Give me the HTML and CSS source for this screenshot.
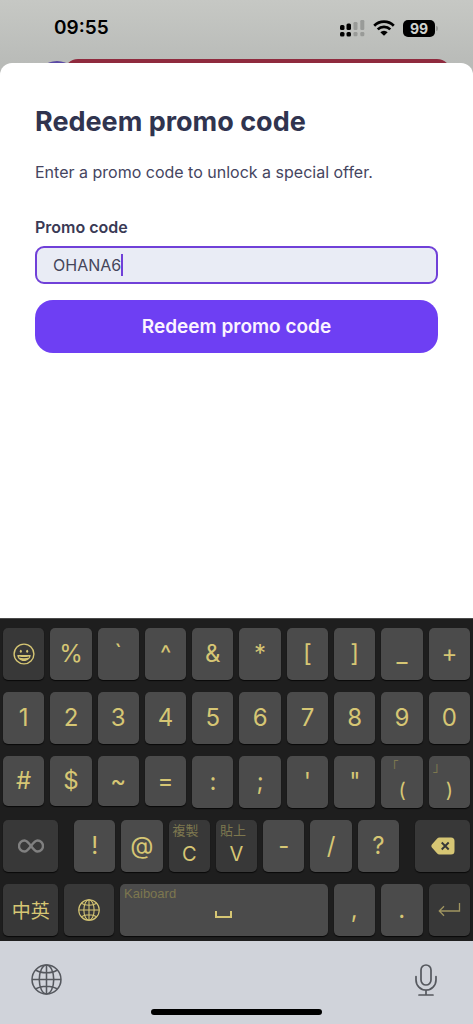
FILE: index.html
```html
<!DOCTYPE html>
<html lang="en">
<head>
<meta charset="utf-8">
<meta name="viewport" content="width=device-width, initial-scale=1">
<title>Redeem promo code</title>
<link rel="stylesheet" href="styles.css">
</head>
<body>
<svg class="defs" aria-hidden="true">
  <symbol id="globe" viewBox="0 0 30 30">
    <g fill="none" stroke="currentColor" stroke-width="1.5">
      <circle cx="15" cy="15" r="14"/>
      <ellipse cx="15" cy="15" rx="7" ry="14"/>
      <path d="M15 1v28M1 15h28M4.500 5.800c5.500 3.600 15.500 3.600 21 0M4.500 24.200c5.500-3.600 15.500-3.600 21 0"/>
    </g>
  </symbol>
</svg>
<div class="screen">
  <header class="status">
    <span class="peek-avatar"></span>
    <span class="peek-banner"></span>
    <time class="clock">09:55</time>
    <div class="indicators">
      <svg class="signal" viewBox="0 0 25 17" aria-hidden="true">
        <rect x="0" y="5" width="4.500" height="5" rx="1.500"/>
        <rect x="6.500" y="3.500" width="4.500" height="6.500" rx="1.500"/>
        <g fill="#999b98"><rect x="13.500" y="2" width="4" height="8" rx="1.200"/><rect x="20.300" y="0" width="4" height="10" rx="1.200"/>
        <rect x="13.500" y="12" width="4" height="4.300" rx="1.200"/><rect x="20.300" y="12" width="4" height="4.300" rx="1.200"/></g>
        <rect x="0" y="12" width="4.500" height="4.500" rx="1.500"/>
        <rect x="6.500" y="12" width="4.500" height="4.500" rx="1.500"/>
      </svg>
      <svg class="wifi" viewBox="0 0 22 16" aria-hidden="true">
        <g fill="none" stroke="#000" stroke-width="2.700"><path d="M1.200 5.700a14 14 0 0 1 19.600 0"/><path d="M4.700 9.400a9 9 0 0 1 12.600 0"/></g>
        <path d="M7.300 12.200a5.300 5.300 0 0 1 7.400 0L11 15.800z"/>
      </svg>
      <span class="battery">99</span>
    </div>
  </header>

  <main class="sheet">
    <h1 class="title">Redeem promo code</h1>
    <p class="lead">Enter a promo code to unlock a special offer.</p>
    <form class="form">
      <label class="label" for="promo">Promo code</label>
      <div class="field">
        <input class="input" id="promo" type="text" value="OHANA6">
        <span class="caret"></span>
      </div>
      <button class="submit" type="button">Redeem promo code</button>
    </form>
  </main>

  <section class="keyboard" aria-label="Keyboard">
    <div class="row">
      <button class="key dark" aria-label="Emoji"><svg class="icon-face" viewBox="0 0 22 22">
        <circle cx="11" cy="11" r="9.900" fill="none" stroke="currentColor" stroke-width="1.400"/>
        <ellipse cx="7.800" cy="8.300" rx="1" ry="1.500" fill="currentColor"/><ellipse cx="14.200" cy="8.300" rx="1" ry="1.500" fill="currentColor"/>
        <path d="M4.300 12h13.400c-.2 3.500-3 6-6.700 6s-6.500-2.500-6.700-6z" fill="currentColor"/>
        <path d="M6 14c2.800.8 7.200.8 10 0" fill="none" stroke="#383838" stroke-width="1.300"/>
      </svg></button>
      <button class="key">%</button>
      <button class="key">`</button>
      <button class="key">^</button>
      <button class="key">&amp;</button>
      <button class="key">*</button>
      <button class="key">[</button>
      <button class="key">]</button>
      <button class="key">_</button>
      <button class="key">+</button>
    </div>
    <div class="row">
      <button class="key">1</button>
      <button class="key">2</button>
      <button class="key">3</button>
      <button class="key">4</button>
      <button class="key">5</button>
      <button class="key">6</button>
      <button class="key">7</button>
      <button class="key">8</button>
      <button class="key">9</button>
      <button class="key">0</button>
    </div>
    <div class="row">
      <button class="key short">#</button>
      <button class="key short">$</button>
      <button class="key short">~</button>
      <button class="key short">=</button>
      <button class="key">:</button>
      <button class="key">;</button>
      <button class="key">'</button>
      <button class="key">"</button>
      <button class="key dual"><span class="hint">「</span><span class="main">(</span></button>
      <button class="key dual"><span class="hint">」</span><span class="main">)</span></button>
    </div>
    <div class="row row-symbols">
      <button class="key dark wide" aria-label="Lock"><svg class="icon-infinity" viewBox="0 0 26 14">
        <path d="M13 7C10.500 3.500 9 1.500 6.500 1.500a5.500 5.500 0 0 0 0 11C9 12.500 10.500 10.500 13 7s4-5.500 6.500-5.500a5.500 5.500 0 0 1 0 11C17 12.500 15.500 10.500 13 7z" fill="none" stroke="currentColor" stroke-width="2.400"/>
      </svg></button>
      <button class="key">!</button>
      <button class="key">@</button>
      <button class="key dark dual"><span class="hint">複製</span><span class="main">C</span></button>
      <button class="key dark dual"><span class="hint">貼上</span><span class="main">V</span></button>
      <button class="key">-</button>
      <button class="key">/</button>
      <button class="key">?</button>
      <button class="key dark wide" aria-label="Delete"><svg class="icon-delete" viewBox="0 0 24 18">
        <path d="M8.500.5H20A3.500 3.500 0 0 1 23.500 4v10A3.500 3.500 0 0 1 20 17.500H8.500c-1 0-1.700-.4-2.300-1L.9 10.400c-.7-.8-.7-2 0-2.800l5.300-6C6.800.9 7.500.5 8.500.5z" fill="currentColor"/>
        <path d="M10.700 5.500l7 7M17.700 5.500l-7 7" stroke="#383838" stroke-width="1.900"/>
      </svg></button>
    </div>
    <div class="row">
      <button class="key dark mode">中英</button>
      <button class="key dark next" aria-label="Next keyboard"><svg class="icon-globe-key"><use href="#globe"/></svg></button>
      <button class="key space" aria-label="Kaiboard space"><span class="hint brand">Kaiboard</span><svg class="icon-space" viewBox="0 0 17 8"><path d="M1 0v6h15V0" fill="none" stroke="currentColor" stroke-width="2"/></svg></button>
      <button class="key small">,</button>
      <button class="key small">.</button>
      <button class="key dark small" aria-label="Return"><svg class="icon-return" viewBox="0 0 23 14"><path d="M21.500 0v8H1.500M6 3.200L1.300 8 6 12.800" fill="none" stroke="currentColor" stroke-width="1.300"/></svg></button>
    </div>
  </section>

  <footer class="dock">
    <button class="dock-button" aria-label="Switch keyboard"><svg class="icon-globe"><use href="#globe"/></svg></button>
    <button class="dock-button" aria-label="Dictate"><svg class="icon-mic" viewBox="0 0 22 32">
      <g fill="none" stroke="currentColor" stroke-width="1.700" stroke-linecap="round"><rect x="6" y="1" width="10" height="20" rx="5"/><path d="M1 12.500v3.500a10 10 0 0 0 20 0v-3.500M11 26v5M4 31h14"/></g>
    </svg></button>
    <span class="home-bar"></span>
  </footer>
</div>
</body>
</html>
```
FILE: styles.css
```css
* { box-sizing: border-box; }
body { margin: 0; font-family: Inter, "Noto Sans CJK TC", sans-serif; color: #3a3a55; }
button, input { font: inherit; color: inherit; margin: 0; padding: 0; border: 0; }
.defs { position: absolute; width: 0; height: 0; }
.screen { display: flex; flex-direction: column; min-height: 100vh; background: #b9bbb8; }

.status { position: relative; display: flex; justify-content: space-between; align-items: center; height: 63px; padding: 0 35px 7px 54px; background: linear-gradient(#c6c8c4, #b9bbb8); color: #000; overflow: hidden; }
.peek-avatar { position: absolute; left: 36px; top: 61px; width: 42px; height: 42px; border-radius: 50%; background: #5b4aa5; }
.peek-banner { position: absolute; left: 64px; right: 22px; top: 59px; height: 40px; border-radius: 14px; background: #8f2a3e; }
.clock { font-size: 19px; font-weight: 600; line-height: 24px; }
.indicators { display: flex; align-items: center; gap: 8px; }
.signal { width: 25px; height: 17px; }
.wifi { width: 22px; height: 16px; }
.battery { position: relative; width: 32px; height: 17px; margin-right: 3px; border-radius: 5px; background: #000; color: #d0d2ce; font-size: 14px; font-weight: 700; line-height: 17px; text-align: center; }
.battery::after { content: ""; position: absolute; left: 33px; top: 6px; width: 2px; height: 5px; border-radius: 0 2px 2px 0; background: #989a97; }

.sheet { flex: 1; padding: 41px 35px; border-radius: 12px 12px 0 0; background: #fff; }
.title { margin: 0; font-size: 27px; font-weight: 700; line-height: 36px; color: #30344f; }
.lead { margin: 20px 0 0; font-size: 16px; line-height: 24px; color: #45455f; }
.form { display: flex; flex-direction: column; margin-top: 32px; }
.label { font-size: 16px; font-weight: 600; line-height: 22px; }
.field { position: relative; margin-top: 8px; }
.input { display: block; width: 100%; height: 38px; padding: 0 16px; border: 2px solid #7040d8; border-radius: 9px; background: #e9ecf5; font-size: 16px; color: #45455a; outline: 0; }
.caret { position: absolute; left: 86px; top: 8px; width: 2px; height: 22px; background: #7040d8; }
.submit { height: 53px; margin-top: 16px; border-radius: 18px; background: #6e3ff3; color: #fbf3ff; font-size: 19px; font-weight: 600; }

.keyboard { display: flex; flex-direction: column; gap: 12px; padding: 9px 3px 5px; border-top: 1px solid #4a4a4a; background: #1e1e1e; color: #d6c674; }
.row { display: flex; gap: 6px; height: 52px; }
.key { display: flex; flex: 3 1 0; min-width: 0; align-items: center; justify-content: center; border-radius: 5px; background: #4b4b4b; box-shadow: 0 1px 1px #080808; font-size: 24px; line-height: 28px; }
.dark { background: #383838; }
.short { height: 50px; }
.wide { flex-grow: 4; }
.row-symbols .wide:first-child { margin-right: 10px; color: #808080; }
.row-symbols .wide:last-child { margin-left: 10px; }
.dual { position: relative; align-items: flex-end; font-size: 20px; }
.main { padding-bottom: 4px; }
.hint { position: absolute; left: 4px; top: 1px; font-size: 13px; line-height: 18px; color: #7d774f; }
.mode { flex-grow: 40; font-size: 19px; font-family: "Noto Sans CJK TC", sans-serif; }
.next { flex-grow: 36; }
.space { position: relative; flex-grow: 150; align-items: flex-end; padding-bottom: 17px; }
.brand { font-family: "Liberation Sans", sans-serif; }
.small { flex-grow: 30; }
.icon-face { width: 22px; height: 22px; }
.icon-infinity { width: 26px; height: 14px; }
.icon-delete { width: 24px; height: 18px; }
.icon-globe-key { width: 22px; height: 22px; }
.icon-space { width: 17px; height: 8px; }
.icon-return { width: 23px; height: 14px; color: #a09560; }

.dock { position: relative; display: flex; justify-content: space-between; align-items: flex-start; height: 83px; padding: 22px 36px 0 31px; background: #d0d3da; color: #55585e; }
.dock-button { display: flex; align-items: center; height: 33px; background: none; }
.icon-globe { width: 31px; height: 31px; }
.icon-mic { width: 22px; height: 32px; }
.home-bar { position: absolute; left: 32%; right: 32%; bottom: 9px; height: 6px; border-radius: 3px; background: #000; }
```
